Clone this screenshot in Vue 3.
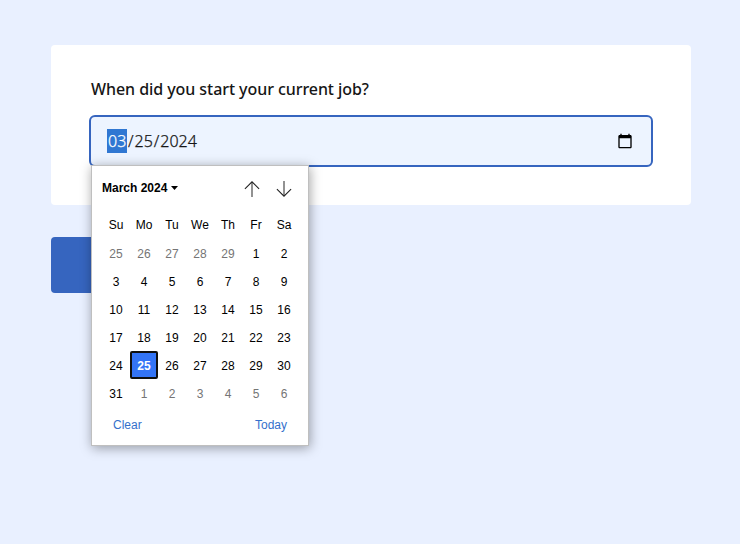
<script setup>
const weekdays = ['Su', 'Mo', 'Tu', 'We', 'Th', 'Fr', 'Sa']
const range = (from, to, outside) =>
  Array.from({ length: to - from + 1 }, (_, i) => ({ day: from + i, outside }))
const days = [...range(25, 29, true), ...range(1, 31, false), ...range(1, 6, true)]
const isSelected = (d) => d.day === 25 && !d.outside
</script>

<template>
  <main class="page">
    <section class="card">
      <label class="label">When did you start your current job?</label>
      <div class="field">
        <div class="date"><span class="segment">03</span><i>/</i><span>25</span><i>/</i><span>2024</span></div>
        <svg class="calendar-icon" width="16" height="16" viewBox="0 0 24 24">
          <path d="M20 3h-1V1h-2v2H7V1H5v2H4c-1.1 0-2 .9-2 2v16c0 1.100.9 2 2 2h16c1.100 0 2-.9 2-2V5c0-1.100-.9-2-2-2zm0 18H4V8h16v13z" />
        </svg>
        <div class="popup">
          <header class="head">
            <span class="month">March 2024</span>
            <svg class="caret" width="7" height="4" viewBox="0 0 7 4"><path d="M0 0h7L3.500 4z" /></svg>
            <div class="arrows">
              <svg width="16" height="16" viewBox="0 0 16 16">
                <path class="stem" d="M8 1v15" /><path class="tip" d="M.9 7.900L8 .8l7.100 7.100" />
              </svg>
              <svg width="16" height="16" viewBox="0 0 16 16">
                <path class="stem" d="M8 0v15" /><path class="tip" d="M.9 8.100L8 15.200l7.100-7.100" />
              </svg>
            </div>
          </header>
          <div class="grid names"><span v-for="w in weekdays" :key="w">{{ w }}</span></div>
          <div class="grid days">
            <span
              v-for="(d, i) in days"
              :key="i"
              :class="{ outside: d.outside, selected: isSelected(d) }"
            >{{ d.day }}</span>
          </div>
          <footer class="foot"><span>Clear</span><span>Today</span></footer>
        </div>
      </div>
    </section>
    <div class="button"></div>
  </main>
</template>

<style>
body {
  background: #e9f0ff;
}
</style>

<style scoped>
.page {
  box-sizing: border-box;
  height: 544px;
  padding: 45px 49px 0 51px;
  font-family: "Noto Sans", sans-serif;
  overflow: hidden;
}
.card {
  box-sizing: border-box;
  height: 160px;
  padding: 32px 38px 0;
  background: #fff;
  border-radius: 4px;
}
.label {
  display: block;
  height: 38px;
  padding-left: 2px;
  font-size: 16px;
  font-weight: 500;
  line-height: 24px;
  letter-spacing: -0.065px;
  color: #161616;
}
.field {
  position: relative;
  box-sizing: border-box;
  display: flex;
  align-items: center;
  justify-content: space-between;
  height: 52px;
  padding: 0 18px 0 16px;
  border: 2px solid #3665bf;
  border-radius: 6px;
  background: #edf4ff;
}
.date {
  display: flex;
  font-size: 16px;
  font-weight: 300;
  line-height: 24px;
  color: #161616;
  -webkit-text-stroke: 0.25px currentColor;
}
.date i {
  width: 7.5px;
  text-align: center;
  font-style: normal;
}
.segment {
  width: 18px;
  padding: 0 1px;
  background: #3077d2;
  color: #fff;
}
.calendar-icon {
  fill: #000;
}
.button {
  width: 160px;
  height: 56px;
  margin-top: 32px;
  border-radius: 4px;
  background: #3665bf;
}
.popup {
  position: absolute;
  top: 48px;
  left: 0;
  z-index: 2;
  box-sizing: border-box;
  width: 218px;
  height: 281px;
  padding: 8px 10px 0;
  border: 1px solid #bfbfbf;
  background: #fff;
  box-shadow: 1px 2px 11px rgba(0, 0, 0, 0.36);
  font-family: "Liberation Sans", Arial, sans-serif;
  font-size: 12px;
  color: #000;
}
.head {
  display: flex;
  align-items: center;
  height: 28px;
}
.month {
  font-weight: 700;
}
.caret {
  margin-left: 4px;
}
.arrows {
  display: flex;
  gap: 16px;
  margin: 2px 6px 0 auto;
}
.arrows path {
  fill: none;
}
.stem {
  stroke: #777;
  stroke-width: 1.6;
}
.tip {
  stroke: #222;
  stroke-width: 1.1;
}
.grid {
  display: grid;
  grid-template-columns: repeat(7, 28px);
  grid-auto-rows: 28px;
}
.grid span {
  box-sizing: border-box;
  line-height: 28px;
  text-align: center;
}
.names {
  padding-top: 9px;
}
.days span {
  line-height: 30px;
}
.days .outside {
  color: #757575;
}
.days .selected {
  border: 2px solid #101010;
  border-radius: 2px;
  background: #3374f6;
  color: #fff;
  font-weight: 700;
  line-height: 26px;
}
.foot {
  display: flex;
  justify-content: space-between;
  padding: 11px 11px 0;
  line-height: 14px;
  color: #3470cb;
}
</style>
